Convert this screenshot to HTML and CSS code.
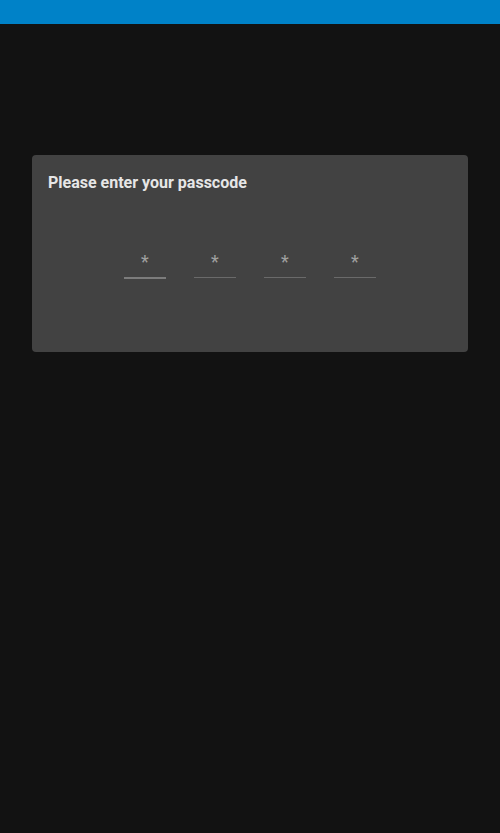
FILE: index.html
```html
<!DOCTYPE html>
<html lang="en">
  <head>
    <meta charset="UTF-8" />
    <meta name="viewport" content="width=device-width, initial-scale=1.0" />
    <title>Passcode</title>
    <link rel="stylesheet" href="styles.css">
  </head>
  <body>
    <div class="top-bar"></div>
    <main class="content">
      <div class="passcode-card">
        <h2 class="passcode-title">Please enter your passcode</h2>
        <div class="passcode-inputs">
          <input class="digit focused" type="password" maxlength="1" placeholder="*" />
          <input class="digit" type="password" maxlength="1" placeholder="*" />
          <input class="digit" type="password" maxlength="1" placeholder="*" />
          <input class="digit" type="password" maxlength="1" placeholder="*" />
        </div>
      </div>
    </main>
  </body>
</html>
```

FILE: styles.css
```css
body {
  margin: 0;
  min-height: 100vh;
  background: #121212;
  font-family: Roboto, "Liberation Sans", sans-serif;
}

.top-bar {
  height: 24px;
  background: #0082c8;
}

.content {
  padding: 131px 32px 0;
}

.passcode-card {
  background: #424242;
  border-radius: 4px;
  padding: 16px 16px 73px;
}

.passcode-title {
  margin: 0;
  font-size: 16px;
  line-height: 24px;
  font-weight: 700;
  color: #e6e6e6;
}

.passcode-inputs {
  display: flex;
  align-items: flex-start;
  justify-content: center;
  gap: 28px;
  margin-top: 53px;
}

.digit {
  width: 42px;
  height: 30px;
  box-sizing: border-box;
  padding: 0 0 2px;
  border: none;
  border-bottom: 1px solid #6a6a6a;
  background: transparent;
  color: #e6e6e6;
  font-family: Roboto, "Liberation Sans", sans-serif;
  font-size: 18px;
  text-align: center;
  outline: none;
}

.digit::placeholder {
  color: #a0a0a0;
  opacity: 1;
}

.digit.focused {
  border-bottom: 2px solid #7c7c7c;
  height: 31px;
}
```
